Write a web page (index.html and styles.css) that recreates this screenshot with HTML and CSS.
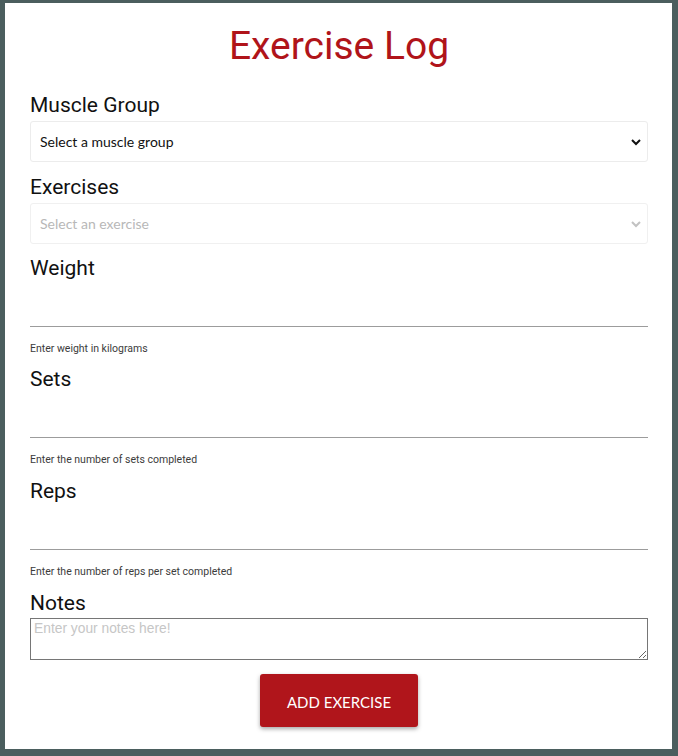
FILE: index.html
```html
<!DOCTYPE html>
<html lang="en">
<head>
<meta charset="utf-8">
<title>Exercise Log</title>
<link rel="stylesheet" href="styles.css">
</head>
<body>
<div class="page">
  <h1 class="title">Exercise Log</h1>
  <form class="form">
    <label class="label label-first" for="muscle">Muscle Group</label>
    <div class="select-wrap">
      <select id="muscle" class="select"><option>Select a muscle group</option></select>
      <svg class="chev" width="10" height="7" viewBox="0 0 10 7"><polyline points="1,1 5,5 9,1" fill="none" stroke="#111" stroke-width="2"/></svg>
    </div>

    <label class="label label-ex" for="exercise">Exercises</label>
    <div class="select-wrap">
      <select id="exercise" class="select select-disabled" disabled><option>Select an exercise</option></select>
      <svg class="chev" width="10" height="7" viewBox="0 0 10 7"><polyline points="1,1 5,5 9,1" fill="none" stroke="#c2c2c2" stroke-width="2"/></svg>
    </div>

    <label class="label label-weight" for="weight">Weight</label>
    <input id="weight" class="line-input" type="text">
    <p class="helper">Enter weight in kilograms</p>

    <label class="label label-next" for="sets">Sets</label>
    <input id="sets" class="line-input" type="text">
    <p class="helper">Enter the number of sets completed</p>

    <label class="label label-next" for="reps">Reps</label>
    <input id="reps" class="line-input" type="text">
    <p class="helper">Enter the number of reps per set completed</p>

    <label class="label label-next" for="notes">Notes</label>
    <textarea id="notes" class="notes" placeholder="Enter your notes here!"></textarea>

    <button type="button" class="btn">Add Exercise</button>
  </form>
</div>
</body>
</html>
```

FILE: styles.css
```css
html, body {
  margin: 0;
  padding: 0;
}
body {
  background: #4b5e5e;
  padding: 3px 6px 7px 5px;
  font-family: Roboto, "Liberation Sans", Arial, sans-serif;
}
.page {
  background: #ffffff;
  height: 746px;
  box-sizing: border-box;
  padding: 21px 24px 0 25px;
}
.title {
  margin: 0;
  font-family: Roboto, sans-serif;
  font-weight: 400;
  font-size: 39px;
  line-height: 44px;
  color: #b0141a;
  text-align: center;
}
.form {
  display: flex;
  flex-direction: column;
}
.label {
  display: block;
  font-size: 21px;
  line-height: 24px;
  color: #111;
}
.label-first { margin-top: 24.6px; }
.label-ex { margin-top: 12.8px; }
.label-weight { margin-top: 11.6px; }
.label-next { margin-top: 12.67px; }

.select-wrap {
  position: relative;
  margin-top: 4.4px;
}
.select {
  display: block;
  width: 100%;
  height: 41px;
  box-sizing: border-box;
  appearance: none;
  -webkit-appearance: none;
  background: #fff;
  border: 1px solid #ececec;
  border-radius: 3px;
  padding: 0 30px 0 9px;
  font-family: Lato, "Noto Sans", sans-serif;
  font-size: 14px;
  color: #111;
  outline: none;
}
.select-disabled {
  color: #b8b8b8;
  border-color: #f0f0f0;
  opacity: 1;
}
.chev {
  position: absolute;
  right: 7px;
  top: 18px;
  pointer-events: none;
}
.line-input {
  display: block;
  width: 100%;
  height: 47px;
  box-sizing: border-box;
  border: none;
  border-bottom: 1px solid #9c9c9c;
  background: transparent;
  outline: none;
  padding: 0;
  font-family: Roboto, sans-serif;
  font-size: 16px;
}
.helper {
  margin: 16px 0 0 0;
  font-size: 10.5px;
  line-height: 12px;
  color: #3c3c3c;
}
.notes {
  display: block;
  width: 100%;
  height: 42px;
  box-sizing: border-box;
  margin: 3px 0 0 0;
  border: 1px solid #767676;
  border-radius: 0;
  padding: 2px 3px;
  font-family: "Liberation Sans", Arial, sans-serif;
  font-size: 13.8px;
  outline: none;
}
.notes::placeholder {
  color: #c6c6c6;
}
.btn {
  display: block;
  margin: 14px auto 0 auto;
  width: 158px;
  height: 53px;
  padding: 3px 0 0 0;
  border: none;
  border-radius: 3px;
  background: #b0151b;
  color: #fff;
  font-family: Lato, "Noto Sans", sans-serif;
  font-size: 15px;
  text-transform: uppercase;
  box-shadow: 0 2px 4px rgba(0, 0, 0, 0.35);
  cursor: pointer;
}
```
